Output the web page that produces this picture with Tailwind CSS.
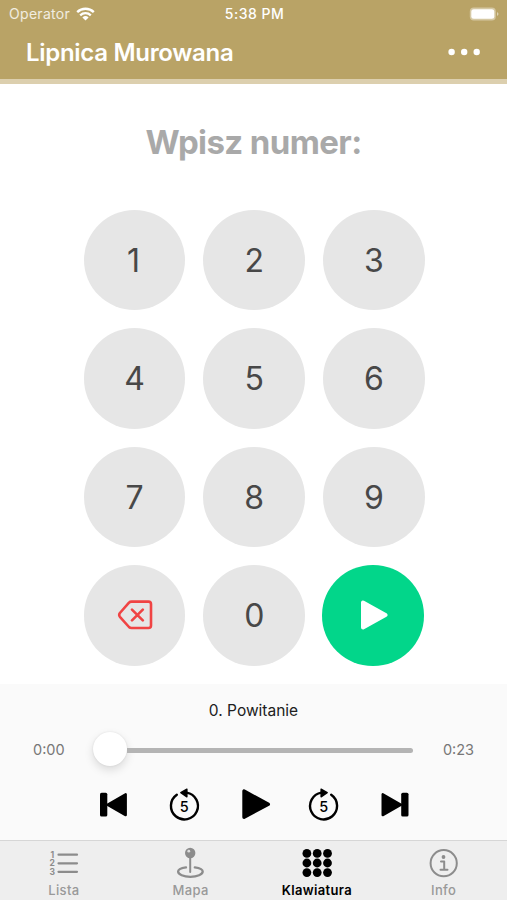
<!DOCTYPE html>
<html lang="pl">
<head>
<meta charset="utf-8">
<title>Lipnica Murowana</title>
<script src="https://cdn.jsdelivr.net/npm/@tailwindcss/browser@4"></script>
</head>
<body class="w-[507px] h-[900px] overflow-hidden flex flex-col bg-white font-['Inter','Liberation_Sans',sans-serif]">
<header class="h-[84px] shrink-0 bg-[#b9a366] border-b-[5px] border-[#dccfae] text-white">
  <div class="h-[27px] grid grid-cols-3 items-center pl-[9px] pr-[7px]">
    <div class="flex items-center gap-[6px] text-[14px] text-white/80 tracking-[0.3px]"><span>Operator</span>
      <svg class="w-[19px] h-[14px] text-white" viewBox="0 0 19 14" fill="none" stroke="currentColor"><path d="M1.2 5.1a12 12 0 0 1 16.6 0" stroke-width="2.4"/><path d="M4.2 8.3a7.7 7.7 0 0 1 10.6 0" stroke-width="2.3"/><path d="M9.5 13.6 6.4 10.5a4.6 4.6 0 0 1 6.2 0z" fill="currentColor" stroke="none"/></svg>
    </div>
    <div class="text-center text-[14px] font-medium tracking-[0.5px]">5:38 PM</div>
    <svg class="w-[31px] h-[14px] justify-self-end" viewBox="0 0 31 14"><rect x=".8" y=".5" width="26" height="13" rx="4" fill="#fff" fill-opacity=".4"/><rect x="2.3" y="2.3" width="23" height="9.4" rx="2.5" fill="#fff"/><path d="M28 5v4c2-1 2-3 0-4z" fill="#fff" fill-opacity=".5"/></svg>
  </div>
  <div class="h-[50px] flex items-center justify-between pl-[26px] pr-[27px]">
    <h1 class="text-[24px] font-semibold tracking-[-0.3px] pt-[2px]">Lipnica Murowana</h1>
    <svg class="w-[32px] h-[8px]" viewBox="0 0 32 8" fill="#fff"><circle cx="3.6" cy="4" r="3.2"/><circle cx="16.2" cy="4" r="3.2"/><circle cx="28.7" cy="4" r="3.2"/></svg>
  </div>
</header>
<main class="h-[600px] shrink-0">
  <h2 class="h-[126px] pt-[37px] text-center text-[33px] leading-[42px] font-bold tracking-[-0.6px] text-[#a9a9a9]">Wpisz numer:</h2>
  <div class="grid grid-cols-[repeat(3,101.5px)] auto-rows-[100.5px] gap-x-[18.2px] gap-y-[18px] pl-[83.8px] -mt-[0.5px] text-[32px] font-normal text-[#484848]">
    <button class="rounded-[50%] bg-[#e6e6e6] pr-[2px] pt-[2px]">1</button><button class="rounded-[50%] bg-[#e6e6e6] pt-[2px]">2</button><button class="rounded-[50%] bg-[#e6e6e6] pt-[2px]">3</button>
    <button class="rounded-[50%] bg-[#e6e6e6] pt-[2px]">4</button><button class="rounded-[50%] bg-[#e6e6e6] pt-[2px]">5</button><button class="rounded-[50%] bg-[#e6e6e6] pt-[2px]">6</button>
    <button class="rounded-[50%] bg-[#e6e6e6] pt-[2px]">7</button><button class="rounded-[50%] bg-[#e6e6e6] pt-[2px]">8</button><button class="rounded-[50%] bg-[#e6e6e6] pt-[2px]">9</button>
    <button class="rounded-[50%] bg-[#e6e6e6] flex items-center justify-center">
      <svg class="w-[36px] h-[30px]" viewBox="0 0 36 30" fill="none" stroke="#f04444" stroke-width="2.6" stroke-linecap="round" stroke-linejoin="round"><path d="M14.5 1.6H31.5Q34 1.6 34 4.1V25.5Q34 28 31.5 28H14.5Q13 28 12 27L2.9 16.8Q1.5 15 2.9 13L12 2.6Q13 1.6 14.5 1.6zM15 9.6l10.8 10.8M25.8 9.6L15 20.4"/></svg>
    </button>
    <button class="rounded-[50%] bg-[#e6e6e6] pt-[2px]">0</button>
    <button class="rounded-[50%] bg-[#02d68a] -ml-px mr-px flex items-center justify-center">
      <svg class="w-[28px] h-[30px] ml-[2px]" viewBox="0 0 28 30"><path d="M3 2.5v25L25.5 15z" fill="#fff" stroke="#fff" stroke-width="4" stroke-linejoin="round"/></svg>
    </button>
  </div>
</main>
<section class="h-[156px] shrink-0 bg-[#fafafa]">
  <p class="h-[48px] pt-[15px] text-center text-[15.5px] leading-[24px] text-[#202020]">0. Powitanie</p>
  <div class="h-[36px] flex items-center pl-[33px] pr-[33px] text-[14.5px] text-[#777]">
    <span class="w-[60px]">0:00</span>
    <div class="w-[320px] flex items-center">
      <div class="w-[34px] h-[34px] shrink-0 rounded-full bg-white shadow-[0_4px_10px_rgba(0,0,0,0.13),0_0_2px_rgba(0,0,0,0.1)] -mt-[2px]"></div>
      <div class="flex-1 h-[5px] rounded-r-full bg-[#b4b4b4] mt-px"></div>
    </div>
    <span class="flex-1 text-right">0:23</span>
  </div>
  <div class="flex pl-[98px] pt-[18px] text-black">
    <svg class="w-[32px] h-[36px] mr-[39px]" viewBox="98 786 32 36" fill="currentColor"><rect x="100" y="792.7" width="7.3" height="23.8" rx="1.6"/><path d="M107.5 804.7 125.7 794.3v20.8z" stroke="currentColor" stroke-width="2.4" stroke-linejoin="round"/></svg>
    <svg class="w-[32px] h-[36px] mr-[39px]" viewBox="169 786 32 36"><path d="M176.8 794.8A13.5 13.5 0 1 0 186.6 792.6" fill="none" stroke="currentColor" stroke-width="2.4" stroke-linecap="round"/><path d="M180.8 792.7 186.9 789.2v7.6z" fill="currentColor" stroke="currentColor" stroke-width="1.4" stroke-linejoin="round"/><text x="184.2" y="811.7" text-anchor="middle" font-size="14.5" font-weight="500" fill="currentColor">5</text></svg>
    <svg class="w-[32px] h-[36px] mr-[36px]" viewBox="240 786 32 36" fill="currentColor"><path d="M244 791v26.2L268.3 804.3z" stroke="currentColor" stroke-width="3.4" stroke-linejoin="round"/></svg>
    <svg class="w-[32px] h-[36px] mr-[39px]" viewBox="308 786 32 36"><path d="M331.2 794.8A13.5 13.5 0 1 1 321.4 792.6" fill="none" stroke="currentColor" stroke-width="2.4" stroke-linecap="round"/><path d="M327.2 792.7 321.1 789.2v7.6z" fill="currentColor" stroke="currentColor" stroke-width="1.4" stroke-linejoin="round"/><text x="323.8" y="811.7" text-anchor="middle" font-size="14.5" font-weight="500" fill="currentColor">5</text></svg>
    <svg class="w-[32px] h-[36px]" viewBox="379 786 32 36" fill="currentColor"><rect x="401.2" y="792.7" width="7.3" height="23.8" rx="1.6"/><path d="M401 804.7 382.7 794.3v20.8z" stroke="currentColor" stroke-width="2.4" stroke-linejoin="round"/></svg>
  </div>
</section>
<nav class="h-[60px] shrink-0 grid grid-cols-4 bg-[#eeeeee] border-t border-[#d6d6d6] text-[13px] font-medium tracking-[0.35px] text-[#999] text-center">
  <a class="flex flex-col items-center pt-[5px]">
    <svg class="w-[32px] h-[34px]" viewBox="47.5 846 32 34"><g stroke="#8c8c8c" stroke-width="2.2" stroke-linecap="round"><path d="M59 854.7h18.5M59 863.3h18.5M59 871.8h18.5"/></g><g fill="#8c8c8c" font-size="8.5" font-weight="700" letter-spacing="0" text-anchor="middle"><text x="52.8" y="857.6">1</text><text x="52.8" y="866.4">2</text><text x="52.8" y="875">3</text></g></svg>
    <span class="leading-[18px] mt-[1px] pl-px">Lista</span>
  </a>
  <a class="flex flex-col items-center pt-[5px]">
    <svg class="w-[32px] h-[34px]" viewBox="174 846 32 34"><circle cx="190.2" cy="853" r="5.2" fill="#8c8c8c"/><circle cx="188.8" cy="851.2" r="1.4" fill="#ddd"/><path d="M190.2 858v14" stroke="#8c8c8c" stroke-width="2" stroke-linecap="round"/><path d="M186 867.3c-4.5.6-7.9 2.2-7.9 4.3 0 2.9 5.5 5.2 12.3 5.2s12.3-2.3 12.3-5.2c0-2.1-3.4-3.7-7.9-4.3" fill="none" stroke="#8c8c8c" stroke-width="2.3" stroke-linecap="round"/></svg>
    <span class="leading-[18px] mt-[1px] pl-px">Mapa</span>
  </a>
  <a class="flex flex-col items-center pt-[5px] text-black font-semibold">
    <svg class="w-[32px] h-[34px]" viewBox="301 846 32 34" fill="currentColor"><circle cx="306.9" cy="853.4" r="4.4"/><circle cx="317.2" cy="853.4" r="4.4"/><circle cx="327.5" cy="853.4" r="4.4"/><circle cx="306.9" cy="863" r="4.4"/><circle cx="317.2" cy="863" r="4.4"/><circle cx="327.5" cy="863" r="4.4"/><circle cx="306.9" cy="872.6" r="4.4"/><circle cx="317.2" cy="872.6" r="4.4"/><circle cx="327.5" cy="872.6" r="4.4"/></svg>
    <span class="leading-[18px] mt-[1px]">Klawiatura</span>
  </a>
  <a class="flex flex-col items-center pt-[5px]">
    <svg class="w-[32px] h-[34px]" viewBox="428 846 32 34" fill="none" stroke="#8c8c8c"><circle cx="443.7" cy="863.2" r="13.1" stroke-width="2"/><circle cx="443.5" cy="857" r="1.9" fill="#8c8c8c" stroke="none"/><path d="M441 861.5h3.2v8M440.5 869.7h7" stroke-width="2" stroke-linecap="round" stroke-linejoin="round"/></svg>
    <span class="leading-[18px] mt-[1px]">Info</span>
  </a>
</nav>
</body>
</html>
